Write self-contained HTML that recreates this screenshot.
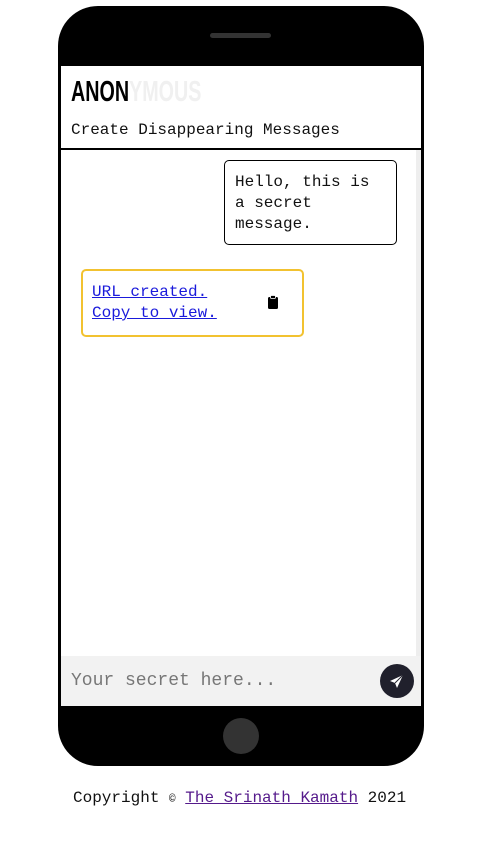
<!DOCTYPE html>
<html><head><style>
*{margin:0;padding:0;box-sizing:border-box}
body{width:477px;height:848px;background:#fff;position:relative;font-family:"Liberation Mono",monospace;overflow:hidden}
.phone{position:absolute;left:58px;top:6px;width:366px;height:760px;background:#000;border-radius:40px}
.spk{position:absolute;left:210px;top:33px;width:61px;height:5px;background:#333;border-radius:3px}
.screen{position:absolute;left:61px;top:66px;width:360px;height:640px;background:#fff;overflow:hidden}
.title{position:absolute;left:10px;top:10px;font-family:"Liberation Sans",sans-serif;font-weight:bold;font-size:29px;transform:scaleX(0.68);transform-origin:left top}
.title span{color:#f0f0f0}
.sub{position:absolute;left:10px;top:55px;font-size:16px;color:#111}
.line{position:absolute;left:0;top:82px;width:360px;height:2px;background:#000}
.scroll{position:absolute;left:355px;top:84px;width:5px;height:506px;background:#eee}
.msg{position:absolute;left:163px;top:94px;width:173px;height:85px;border:1.5px solid #000;border-radius:5px;padding:11px 10px;font-size:16px;line-height:21px;color:#111}
.url{position:absolute;left:20px;top:203px;width:223px;height:68px;border:2px solid #f2c230;border-radius:5px;padding:11px 9px;font-size:16px;line-height:21px}
.url a{color:#1a1adb;text-decoration:underline}
.clip{position:absolute;left:184px;top:24px}
.input{position:absolute;left:0;top:590px;width:360px;height:50px;background:#f2f2f2}
.ph{position:absolute;left:10px;top:15px;font-size:18px;color:#777}
.send{position:absolute;left:319px;top:8px;width:34px;height:34px;border-radius:50%;background:#20202c}
.home{position:absolute;left:223px;top:718px;width:36px;height:36px;border-radius:50%;background:#333}
.foot{position:absolute;left:73px;top:789px;font-size:16px;color:#111;white-space:nowrap}
.foot a{color:#551a8b;text-decoration:underline}
.foot small{font-size:11px}
</style></head><body>
<div class="phone"></div>
<div class="spk"></div>
<div class="screen">
<div class="title">ANON<span>YMOUS</span></div>
<div class="sub">Create Disappearing Messages</div>
<div class="line"></div>
<div class="scroll"></div>
<div class="msg">Hello, this is<br>a secret<br>message.</div>
<div class="url"><a>URL created.<br>Copy to view.</a>
<svg class="clip" width="12" height="14" viewBox="0 0 12 14"><rect x="1" y="2" width="10" height="12" rx="1.5" fill="#000"/><rect x="3.5" y="0.5" width="5" height="3" rx="1" fill="#000" stroke="#fff" stroke-width="0.8"/></svg></div>
<div class="input"><div class="ph">Your secret here...</div>
<div class="send"><svg width="34" height="34" viewBox="0 0 34 34"><path d="M23 11 L10 17 L15 19 L17 24 Z" fill="#fff"/><path d="M23 11 L15 19" stroke="#20202c" stroke-width="1"/></svg></div></div>
</div>
<div class="home"></div>
<div class="foot">Copyright <small>©</small> <a>The Srinath Kamath</a> 2021</div>
</body></html>
